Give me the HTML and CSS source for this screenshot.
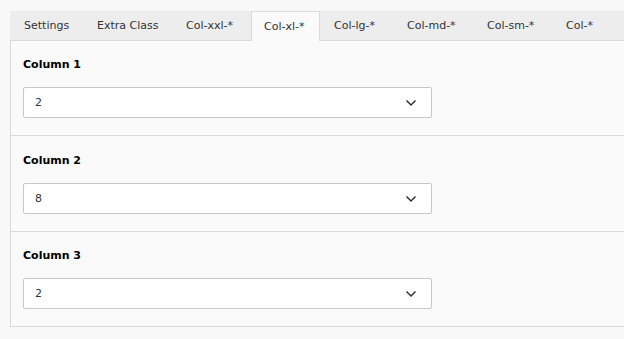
FILE: index.html
```html
<!DOCTYPE html>
<html lang="en">
<head>
  <meta charset="UTF-8">
  <title>Column settings</title>
  <link rel="stylesheet" href="styles.css">
</head>
<body>
  <div class="editor">
    <ul class="tabs">
      <li class="tab tab-settings">Settings</li>
      <li class="tab tab-extra">Extra Class</li>
      <li class="tab tab-xxl">Col-xxl-*</li>
      <li class="tab tab-xl active">Col-xl-*</li>
      <li class="tab tab-lg">Col-lg-*</li>
      <li class="tab tab-md">Col-md-*</li>
      <li class="tab tab-sm">Col-sm-*</li>
      <li class="tab">Col-*</li>
    </ul>

    <div class="panel">
      <div class="field">
        <label class="label">Column 1</label>
        <div class="select">
          <span>2</span>
          <svg class="chevron" width="12" height="8" viewBox="0 0 12 8"><path d="M1.5 1.5 L6 6 L10.5 1.5" fill="none" stroke="#333" stroke-width="1.5"/></svg>
        </div>
      </div>
      <div class="field field-mid">
        <label class="label">Column 2</label>
        <div class="select">
          <span>8</span>
          <svg class="chevron" width="12" height="8" viewBox="0 0 12 8"><path d="M1.5 1.5 L6 6 L10.5 1.5" fill="none" stroke="#333" stroke-width="1.5"/></svg>
        </div>
      </div>
      <div class="field">
        <label class="label">Column 3</label>
        <div class="select">
          <span>2</span>
          <svg class="chevron" width="12" height="8" viewBox="0 0 12 8"><path d="M1.5 1.5 L6 6 L10.5 1.5" fill="none" stroke="#333" stroke-width="1.5"/></svg>
        </div>
      </div>
    </div>
  </div>
</body>
</html>
```

FILE: styles.css
```css
body {
  margin: 0;
  padding: 0;
  background: #f8f8f8;
  font-family: "DejaVu Sans", Verdana, sans-serif;
  font-size: 11px;
  color: #333;
  overflow: hidden;
}

.editor {
  margin: 11px 0 0 10px;
  width: 700px;
}

.tabs {
  list-style: none;
  margin: 0;
  padding: 0;
  display: flex;
  height: 29px;
  background: #ededed;
  border-bottom: 1px solid #d9d9d9;
}

.tab {
  box-sizing: border-box;
  padding: 1px 13px 0;
  line-height: 28px;
  border-left: 1px solid transparent;
  border-right: 1px solid transparent;
  white-space: nowrap;
}

.tab-settings { width: 73px; }
.tab-extra { width: 89px; }
.tab-xxl { width: 79px; }
.tab-xl { width: 69px; }
.tab-lg { width: 73px; }
.tab-md { width: 80px; }
.tab-sm { width: 79px; }

.tab.active {
  background: #fafafa;
  border-color: #d9d9d9;
  border-top: 1px solid #d9d9d9;
  height: 30px;
  padding: 0 12px;
  line-height: 29px;
  margin-bottom: -1px;
}

.panel {
  background: #fafafa;
  border-left: 1px solid #d9d9d9;
}

.field {
  padding: 17px 12px 17px;
  border-bottom: 1px solid #d9d9d9;
}

.field-mid {
  padding-top: 18px;
}

.label {
  display: block;
  font-weight: bold;
  color: #000;
  line-height: 14px;
}

.select {
  box-sizing: border-box;
  margin-top: 15px;
  width: 409px;
  height: 31px;
  background: #fff;
  border: 1px solid #c8c8c8;
  border-radius: 2px;
  display: flex;
  align-items: center;
  justify-content: space-between;
  padding: 0 14px 0 11px;
}

.chevron {
  display: block;
}
```
